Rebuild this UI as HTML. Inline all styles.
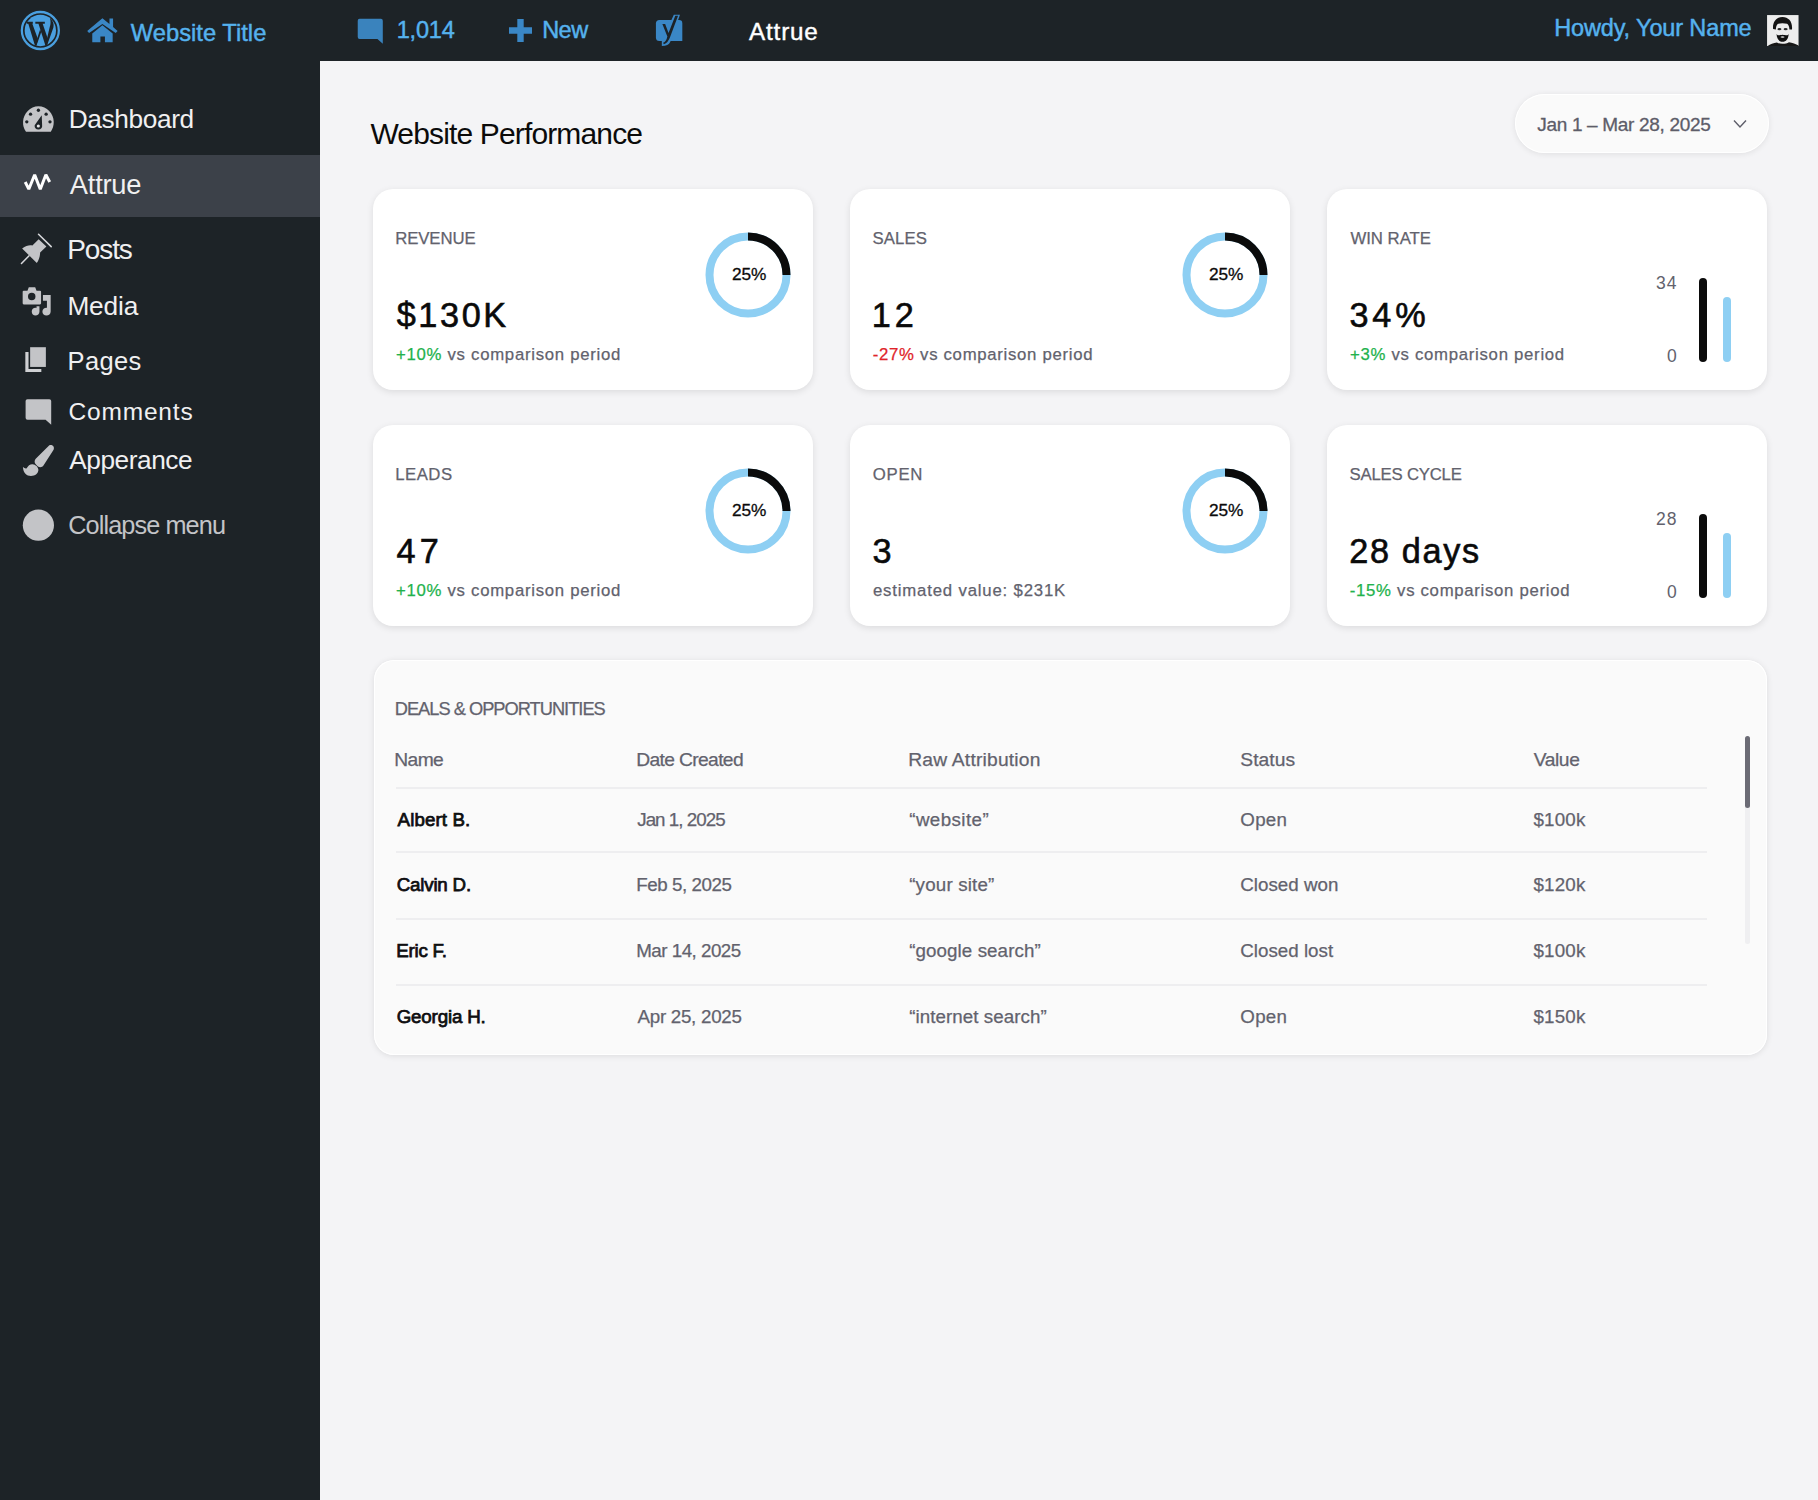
<!DOCTYPE html>
<html><head><meta charset="utf-8"><title>Attrue</title><style>
*{margin:0;padding:0;box-sizing:border-box}
html,body{width:1818px;height:1500px;overflow:hidden;background:#f4f4f6;font-family:"Liberation Sans",sans-serif}
.t{position:absolute;white-space:nowrap;line-height:1}
.abs{position:absolute}
#bar{position:absolute;left:0;top:0;width:1818px;height:61px;background:#1d2327}
#side{position:absolute;left:0;top:61px;width:320px;height:1439px;background:#1d2327}
#act{position:absolute;left:0;top:155px;width:320px;height:62px;background:#3c4149}
.card{position:absolute;width:440px;height:201px;background:#fff;border-radius:20px;box-shadow:0 2px 7px rgba(0,0,0,0.10)}
.tcard{position:absolute;left:374px;top:660px;width:1393px;height:395px;background:#fafafa;border-radius:20px;box-shadow:inset 0 0 0 1px #fff,0 1px 6px rgba(0,0,0,0.10)}
.pill{position:absolute;left:1515px;top:94px;width:254px;height:59px;border-radius:30px;background:#fafafa;box-shadow:inset 0 0 0 1px #fff,0 1px 6px rgba(0,0,0,0.09)}
.bar{border-radius:5px}
</style></head>
<body>
<div id="bar"></div><div id="side"></div><div id="act"></div>
<div class="pill"></div>
<svg class="abs" style="left:15px;top:6px" width="50" height="50" viewBox="0 0 1500 1500">
<circle cx="760" cy="735" r="555" fill="none" stroke="#4a9fdf" stroke-width="68"/>
<circle cx="760" cy="735" r="470" fill="#4a9fdf"/>
<g fill="#1d2327">
<path d="M360,476 L535,476 L535,530 L520,530 L690,1000 L640,1185 L598,1185 L400,530 L360,530 Z"/>
<path d="M598,1185 L645,1185 L785,790 L755,700 Z"/>
<path d="M610,476 L895,476 L895,530 L830,530 L995,1010 L955,1185 L912,1185 L705,530 L610,530 Z"/>
<path d="M912,1185 L960,1185 L1150,650 C1180,540 1140,440 1050,375 C1075,460 1075,540 1040,640 Z"/>
</g>
</svg>
<svg class="abs" style="left:82px;top:10px" width="40" height="40" viewBox="0 0 1500 1500">
<path fill="#3a87c6" d="M195,785 L765,305 L1030,525 L1030,320 L1165,320 L1165,640 L1335,785 L1265,860 L765,525 L265,860 Z"/>
<path fill="#3a87c6" d="M385,880 L765,570 L1150,880 L1150,1205 L860,1205 L860,990 L690,990 L690,1205 L385,1205 Z"/>
</svg>
<svg class="abs" style="left:350px;top:12px" width="40" height="40" viewBox="0 0 1500 1500">
<path fill="#3a83bd" d="M360,255 L1160,255 Q1230,255 1230,325 L1230,1195 L1030,1010 L360,1010 Q290,1010 290,940 L290,325 Q290,255 360,255 Z"/>
</svg>
<svg class="abs" style="left:509px;top:19px" width="24" height="23" viewBox="0 0 24 23">
<path fill="#3a87c6" d="M8.3,0 L14.7,0 L14.7,8.3 L23,8.3 L23,14.7 L14.7,14.7 L14.7,23 L8.3,23 L8.3,14.7 L0,14.7 L0,8.3 L8.3,8.3 Z"/>
</svg>
<svg class="abs" style="left:648px;top:10px" width="44" height="44" viewBox="0 0 1500 1500">
<path fill="#3a87c6" d="M390,340 L1060,340 Q1170,340 1170,450 L1170,1060 L390,1060 Q270,1060 270,940 L270,460 Q270,340 390,340 Z"/>
<path fill="#3a87c6" d="M880,165 L1090,165 L760,1080 Q700,1230 470,1230 L470,1060 Z"/>
<path fill="#1d2327" d="M490,478 L585,478 L700,780 L930,200 L1025,200 L760,900 Q690,1110 540,1170 L515,1120 Q630,1060 660,900 Z"/>
</svg>
<svg class="abs" style="left:1762px;top:10px" width="40" height="40" viewBox="0 0 1500 1500">
<rect x="190" y="190" width="1180" height="1160" fill="#ededed"/>
<path fill="#141414" d="M415,710 C390,430 560,260 770,262 C995,265 1150,430 1125,730 L1030,730 C1020,620 990,540 940,520 C840,490 690,490 600,520 C545,560 525,630 520,730 Z"/>
<ellipse cx="655" cy="720" rx="75" ry="42" fill="#2b2b2b"/>
<ellipse cx="885" cy="720" rx="75" ry="42" fill="#2b2b2b"/>
<path fill="#111" d="M545,900 C555,1090 650,1195 770,1195 C900,1195 990,1090 1000,900 C960,975 900,935 770,925 C650,935 590,975 545,900 Z"/>
<path fill="#e6e6e6" d="M690,1010 C720,975 820,975 850,1010 C830,1050 720,1050 690,1010 Z"/>
<path fill="#171717" d="M215,1350 C300,1285 440,1230 560,1215 C650,1285 900,1285 1010,1205 C1130,1225 1280,1275 1370,1335 L1370,1350 Z"/>
</svg>
<svg class="abs" style="left:18px;top:100px" width="40" height="40" viewBox="0 0 1500 1500">
<path fill="#c3c4c7" d="M300,1190 C210,1060 185,960 190,820 C200,500 460,230 765,230 C1080,230 1340,500 1340,820 C1340,960 1310,1070 1230,1190 Z"/>
<g fill="#1d2327">
<circle cx="765" cy="385" r="62"/><circle cx="470" cy="530" r="62"/><circle cx="1055" cy="530" r="62"/>
<circle cx="330" cy="820" r="62"/><circle cx="1200" cy="820" r="62"/>
<path d="M890,570 L905,960 C920,1040 860,1110 765,1110 C670,1110 610,1040 625,950 Z"/>
</g>
<circle cx="762" cy="975" r="58" fill="#e6e6e8"/>
</svg>
<svg class="abs" style="left:18px;top:166px" width="40" height="40" viewBox="0 0 1500 1500">
<polyline fill="none" stroke="#ffffff" stroke-width="112" stroke-linejoin="bevel" points="270,600 405,870 625,330 835,870 1045,330 1190,600"/>
</svg>
<svg class="abs" style="left:16px;top:229px" width="40" height="40" viewBox="0 0 1500 1500">
<line x1="845" y1="195" x2="1320" y2="660" stroke="#d6d7da" stroke-width="58" stroke-linecap="round"/>
<line x1="205" y1="1295" x2="490" y2="1005" stroke="#d6d7da" stroke-width="58" stroke-linecap="round"/>
<path fill="#c3c4c7" d="M850,385 L1140,655 L905,885 C900,1030 860,1160 780,1275 L230,730 C380,620 500,590 615,615 Z"/>
</svg>
<svg class="abs" style="left:16px;top:282px" width="40" height="40" viewBox="0 0 1500 1500">
<path fill="#c3c4c7" d="M480,200 L720,200 L770,330 L900,330 Q940,330 940,370 L940,800 Q940,840 900,840 L290,840 Q250,840 250,800 L250,370 Q250,330 290,330 L430,330 Z"/>
<circle cx="590" cy="540" r="140" fill="#1d2327"/>
<path fill="#c3c4c7" d="M1010,490 L1300,490 L1300,1110 C1300,1200 1230,1260 1140,1260 C1060,1260 990,1200 990,1120 C990,1030 1060,970 1140,970 C1150,970 1160,970 1160,975 L1160,700 L1010,700 Z"/>
<path fill="#c3c4c7" d="M770,910 L880,910 L880,1110 C880,1200 810,1260 730,1260 C650,1260 590,1200 590,1110 C590,1030 650,970 730,970 C750,970 770,975 770,980 Z"/>
</svg>
<svg class="abs" style="left:16px;top:340px" width="40" height="40" viewBox="0 0 1500 1500">
<rect x="530" y="270" width="590" height="740" fill="#c3c4c7"/>
<path fill="#cfd0d3" d="M350,450 L470,450 L470,1090 L950,1090 L950,1200 L350,1200 Z"/>
</svg>
<svg class="abs" style="left:16px;top:392px" width="40" height="40" viewBox="0 0 1500 1500">
<path fill="#c3c4c7" d="M430,270 L1250,270 Q1320,270 1320,340 L1320,1225 L1110,1040 L430,1040 Q360,1040 360,970 L360,340 Q360,270 430,270 Z"/>
</svg>
<svg class="abs" style="left:16px;top:440px" width="40" height="40" viewBox="0 0 1500 1500">
<path fill="#c3c4c7" d="M1250,200 C1370,160 1460,260 1410,370 L1030,960 C980,1030 880,1040 810,980 L740,910 C680,850 690,760 740,700 Z"/>
<path fill="#c3c4c7" d="M620,905 C730,915 840,1010 840,1120 C840,1260 720,1350 560,1350 C400,1350 270,1240 260,1015 C310,1060 360,1080 400,1060 C450,960 530,900 620,905 Z"/>
</svg>
<svg class="abs" style="left:22px;top:509px" width="33" height="33" viewBox="0 0 33 33"><circle cx="16.4" cy="16.2" r="15.6" fill="#c3c4c7"/></svg>
<svg class="abs" style="left:1730px;top:116px" width="20" height="16" viewBox="0 0 20 16"><polyline points="4,4.5 10,11 16,4.5" fill="none" stroke="#5d5d69" stroke-width="1.4"/></svg>

<div class="t" style="left:130.75px;top:21px;font-size:23.75px;letter-spacing:0.007px;color:#55b2ee;-webkit-text-stroke-width:0.45px;">Website Title</div>
<div class="t" style="left:396.72px;top:19px;font-size:23.5px;letter-spacing:-0.200px;color:#55b2ee;-webkit-text-stroke-width:0.45px;">1,014</div>
<div class="t" style="left:542.20px;top:19px;font-size:23.5px;letter-spacing:-0.551px;color:#55b2ee;-webkit-text-stroke-width:0.45px;">New</div>
<div class="t" style="left:749.04px;top:20px;font-size:24.25px;letter-spacing:0.817px;color:#ffffff;-webkit-text-stroke-width:0.4px;">Attrue</div>
<div class="t" style="left:1554.20px;top:17px;font-size:23.5px;letter-spacing:-0.130px;color:#55b2ee;-webkit-text-stroke-width:0.45px;">Howdy, Your Name</div>
<div class="t" style="left:68.68px;top:106px;font-size:26.25px;letter-spacing:-0.372px;color:#f0f0f1;">Dashboard</div>
<div class="t" style="left:69.85px;top:171px;font-size:27.25px;letter-spacing:-0.226px;color:#f0f0f1;">Attrue</div>
<div class="t" style="left:67.26px;top:236px;font-size:28.0px;letter-spacing:-1.108px;color:#f0f0f1;">Posts</div>
<div class="t" style="left:67.40px;top:293px;font-size:26.25px;letter-spacing:-0.150px;color:#f0f0f1;">Media</div>
<div class="t" style="left:67.56px;top:349px;font-size:25.5px;letter-spacing:0.368px;color:#f0f0f1;">Pages</div>
<div class="t" style="left:68.43px;top:400px;font-size:24.5px;letter-spacing:0.834px;color:#f0f0f1;">Comments</div>
<div class="t" style="left:69.27px;top:447px;font-size:26.25px;letter-spacing:-0.463px;color:#f0f0f1;">Apperance</div>
<div class="t" style="left:68.29px;top:513px;font-size:25.25px;letter-spacing:-0.899px;color:#c3c4c7;">Collapse menu</div>
<div class="t" style="left:370.45px;top:119px;font-size:30.0px;letter-spacing:-0.852px;color:#0b0b0b;">Website Performance</div>
<div class="t" style="left:1537.27px;top:115px;font-size:19.0px;letter-spacing:-0.317px;color:#5d5d69;-webkit-text-stroke-width:0.3px;">Jan 1 – Mar 28, 2025</div>
<div class="card" style="left:373px;top:189px"></div>
<div class="card" style="left:850px;top:189px"></div>
<div class="card" style="left:1327px;top:189px"></div>
<div class="card" style="left:373px;top:425px"></div>
<div class="card" style="left:850px;top:425px"></div>
<div class="card" style="left:1327px;top:425px"></div>
<div class="t" style="left:395.28px;top:231px;font-size:16.75px;letter-spacing:-0.114px;color:#62626d;-webkit-text-stroke-width:0.25px;">REVENUE</div>
<div class="t" style="left:396.68px;top:298px;font-size:34.25px;letter-spacing:2.609px;color:#0a0a0a;-webkit-text-stroke-width:0.6px;">$130K</div>
<div class="t" style="left:395.90px;top:347px;font-size:16.75px;letter-spacing:0.722px;color:#62626d;-webkit-text-stroke-width:0.25px;"><span style="color:#22b24c">+10%</span> vs comparison period</div>
<svg class="abs" style="left:702.5px;top:229.60000000000002px" width="90" height="90" viewBox="0 0 90 90"><circle cx="45" cy="45" r="38.5" fill="none" stroke="#8ecff3" stroke-width="8"/><path d="M45 6.5 A38.5 38.5 0 0 1 83.5 45" fill="none" stroke="#0b0b0b" stroke-width="8"/></svg>
<div class="t" style="left:732.01px;top:266px;font-size:17.25px;letter-spacing:-0.044px;color:#0b0b0b;-webkit-text-stroke-width:0.3px;">25%</div>
<div class="t" style="left:872.61px;top:231px;font-size:16.75px;letter-spacing:0.069px;color:#62626d;-webkit-text-stroke-width:0.25px;">SALES</div>
<div class="t" style="left:871.87px;top:298px;font-size:34.25px;letter-spacing:3.841px;color:#0a0a0a;-webkit-text-stroke-width:0.6px;">12</div>
<div class="t" style="left:872.83px;top:347px;font-size:16.75px;letter-spacing:0.694px;color:#62626d;-webkit-text-stroke-width:0.25px;"><span style="color:#e0242a">-27%</span> vs comparison period</div>
<svg class="abs" style="left:1179.5px;top:229.60000000000002px" width="90" height="90" viewBox="0 0 90 90"><circle cx="45" cy="45" r="38.5" fill="none" stroke="#8ecff3" stroke-width="8"/><path d="M45 6.5 A38.5 38.5 0 0 1 83.5 45" fill="none" stroke="#0b0b0b" stroke-width="8"/></svg>
<div class="t" style="left:1209.01px;top:266px;font-size:17.25px;letter-spacing:-0.044px;color:#0b0b0b;-webkit-text-stroke-width:0.3px;">25%</div>
<div class="t" style="left:1350.41px;top:231px;font-size:16.75px;letter-spacing:-0.012px;color:#62626d;-webkit-text-stroke-width:0.25px;">WIN RATE</div>
<div class="t" style="left:1349.56px;top:298px;font-size:34.25px;letter-spacing:3.763px;color:#0a0a0a;-webkit-text-stroke-width:0.6px;">34%</div>
<div class="t" style="left:1349.90px;top:347px;font-size:16.75px;letter-spacing:0.715px;color:#62626d;-webkit-text-stroke-width:0.25px;"><span style="color:#22b24c">+3%</span> vs comparison period</div>
<div class="t" style="left:1655.97px;top:275px;font-size:17.5px;letter-spacing:0.924px;color:#62626d;">34</div>
<div class="t" style="left:1666.97px;top:348px;font-size:17.5px;letter-spacing:0.000px;color:#62626d;">0</div>
<div class="abs bar" style="left:1699px;top:278px;width:8px;height:84px;background:#0b0b0b"></div>
<div class="abs bar" style="left:1722.5px;top:297px;width:8.5px;height:65px;background:#8ecff3"></div>
<div class="t" style="left:395.28px;top:467px;font-size:16.75px;letter-spacing:0.479px;color:#62626d;-webkit-text-stroke-width:0.25px;">LEADS</div>
<div class="t" style="left:396.57px;top:534px;font-size:34.25px;letter-spacing:4.051px;color:#0a0a0a;-webkit-text-stroke-width:0.6px;">47</div>
<div class="t" style="left:395.90px;top:583px;font-size:16.75px;letter-spacing:0.722px;color:#62626d;-webkit-text-stroke-width:0.25px;"><span style="color:#22b24c">+10%</span> vs comparison period</div>
<svg class="abs" style="left:702.5px;top:465.6px" width="90" height="90" viewBox="0 0 90 90"><circle cx="45" cy="45" r="38.5" fill="none" stroke="#8ecff3" stroke-width="8"/><path d="M45 6.5 A38.5 38.5 0 0 1 83.5 45" fill="none" stroke="#0b0b0b" stroke-width="8"/></svg>
<div class="t" style="left:732.01px;top:502px;font-size:17.25px;letter-spacing:-0.044px;color:#0b0b0b;-webkit-text-stroke-width:0.3px;">25%</div>
<div class="t" style="left:872.79px;top:467px;font-size:16.75px;letter-spacing:0.733px;color:#62626d;-webkit-text-stroke-width:0.25px;">OPEN</div>
<div class="t" style="left:872.56px;top:534px;font-size:34.25px;letter-spacing:0.000px;color:#0a0a0a;-webkit-text-stroke-width:0.6px;">3</div>
<div class="t" style="left:872.96px;top:583px;font-size:16.75px;letter-spacing:0.823px;color:#62626d;-webkit-text-stroke-width:0.25px;"><span style="color:#22b24c"></span>estimated value: $231K</div>
<svg class="abs" style="left:1179.5px;top:465.6px" width="90" height="90" viewBox="0 0 90 90"><circle cx="45" cy="45" r="38.5" fill="none" stroke="#8ecff3" stroke-width="8"/><path d="M45 6.5 A38.5 38.5 0 0 1 83.5 45" fill="none" stroke="#0b0b0b" stroke-width="8"/></svg>
<div class="t" style="left:1209.01px;top:502px;font-size:17.25px;letter-spacing:-0.044px;color:#0b0b0b;-webkit-text-stroke-width:0.3px;">25%</div>
<div class="t" style="left:1349.61px;top:467px;font-size:16.75px;letter-spacing:-0.229px;color:#62626d;-webkit-text-stroke-width:0.25px;">SALES CYCLE</div>
<div class="t" style="left:1349.26px;top:534px;font-size:34.25px;letter-spacing:1.655px;color:#0a0a0a;-webkit-text-stroke-width:0.6px;">28 days</div>
<div class="t" style="left:1349.83px;top:583px;font-size:16.75px;letter-spacing:0.694px;color:#62626d;-webkit-text-stroke-width:0.25px;"><span style="color:#22b24c">-15%</span> vs comparison period</div>
<div class="t" style="left:1655.94px;top:511px;font-size:17.5px;letter-spacing:1.199px;color:#62626d;">28</div>
<div class="t" style="left:1666.97px;top:584px;font-size:17.5px;letter-spacing:0.000px;color:#62626d;">0</div>
<div class="abs bar" style="left:1699px;top:514px;width:8px;height:84px;background:#0b0b0b"></div>
<div class="abs bar" style="left:1722.5px;top:533px;width:8.5px;height:65px;background:#8ecff3"></div>
<div class="tcard"></div>
<div class="t" style="left:394.72px;top:700px;font-size:18.25px;letter-spacing:-0.991px;color:#62626d;-webkit-text-stroke-width:0.25px;">DEALS &amp; OPPORTUNITIES</div>
<div class="t" style="left:394.27px;top:750px;font-size:19.25px;letter-spacing:-0.623px;color:#62626d;-webkit-text-stroke-width:0.25px;">Name</div>
<div class="t" style="left:636.19px;top:750px;font-size:19.25px;letter-spacing:-0.643px;color:#62626d;-webkit-text-stroke-width:0.25px;">Date Created</div>
<div class="t" style="left:908.28px;top:750px;font-size:19.25px;letter-spacing:0.193px;color:#62626d;-webkit-text-stroke-width:0.25px;">Raw Attribution</div>
<div class="t" style="left:1240.27px;top:750px;font-size:19.25px;letter-spacing:0.054px;color:#62626d;-webkit-text-stroke-width:0.25px;">Status</div>
<div class="t" style="left:1533.69px;top:750px;font-size:19.25px;letter-spacing:-0.411px;color:#62626d;-webkit-text-stroke-width:0.25px;">Value</div>
<div class="abs" style="left:396px;top:787px;width:1311px;height:2px;background:#eeeef0"></div>
<div class="t" style="left:397.54px;top:811px;font-size:18.75px;letter-spacing:0.112px;color:#0e0e10;-webkit-text-stroke-width:0.75px;">Albert B.</div>
<div class="t" style="left:637.21px;top:811px;font-size:18.75px;letter-spacing:-0.946px;color:#62626d;-webkit-text-stroke-width:0.25px;">Jan 1, 2025</div>
<div class="t" style="left:909.21px;top:811px;font-size:18.75px;letter-spacing:0.430px;color:#62626d;-webkit-text-stroke-width:0.25px;">“website”</div>
<div class="t" style="left:1240.29px;top:811px;font-size:18.75px;letter-spacing:0.283px;color:#62626d;-webkit-text-stroke-width:0.25px;">Open</div>
<div class="t" style="left:1533.49px;top:811px;font-size:18.75px;letter-spacing:0.170px;color:#62626d;-webkit-text-stroke-width:0.25px;">$100k</div>
<div class="abs" style="left:396px;top:851px;width:1311px;height:2px;background:#eeeef0"></div>
<div class="t" style="left:396.75px;top:876px;font-size:18.75px;letter-spacing:-0.211px;color:#0e0e10;-webkit-text-stroke-width:0.75px;">Calvin D.</div>
<div class="t" style="left:636.26px;top:876px;font-size:18.75px;letter-spacing:-0.429px;color:#62626d;-webkit-text-stroke-width:0.25px;">Feb 5, 2025</div>
<div class="t" style="left:909.21px;top:876px;font-size:18.75px;letter-spacing:0.177px;color:#62626d;-webkit-text-stroke-width:0.25px;">“your site”</div>
<div class="t" style="left:1240.31px;top:876px;font-size:18.75px;letter-spacing:0.010px;color:#62626d;-webkit-text-stroke-width:0.25px;">Closed won</div>
<div class="t" style="left:1533.49px;top:876px;font-size:18.75px;letter-spacing:0.170px;color:#62626d;-webkit-text-stroke-width:0.25px;">$120k</div>
<div class="abs" style="left:396px;top:918px;width:1311px;height:2px;background:#eeeef0"></div>
<div class="t" style="left:396.16px;top:942px;font-size:18.75px;letter-spacing:-0.218px;color:#0e0e10;-webkit-text-stroke-width:0.75px;">Eric F.</div>
<div class="t" style="left:636.26px;top:942px;font-size:18.75px;letter-spacing:-0.505px;color:#62626d;-webkit-text-stroke-width:0.25px;">Mar 14, 2025</div>
<div class="t" style="left:909.21px;top:942px;font-size:18.75px;letter-spacing:0.086px;color:#62626d;-webkit-text-stroke-width:0.25px;">“google search”</div>
<div class="t" style="left:1240.31px;top:942px;font-size:18.75px;letter-spacing:0.005px;color:#62626d;-webkit-text-stroke-width:0.25px;">Closed lost</div>
<div class="t" style="left:1533.49px;top:942px;font-size:18.75px;letter-spacing:0.170px;color:#62626d;-webkit-text-stroke-width:0.25px;">$100k</div>
<div class="abs" style="left:396px;top:984px;width:1311px;height:2px;background:#eeeef0"></div>
<div class="t" style="left:396.70px;top:1008px;font-size:18.75px;letter-spacing:-0.179px;color:#0e0e10;-webkit-text-stroke-width:0.75px;">Georgia H.</div>
<div class="t" style="left:637.53px;top:1008px;font-size:18.75px;letter-spacing:-0.274px;color:#62626d;-webkit-text-stroke-width:0.25px;">Apr 25, 2025</div>
<div class="t" style="left:909.21px;top:1008px;font-size:18.75px;letter-spacing:0.062px;color:#62626d;-webkit-text-stroke-width:0.25px;">“internet search”</div>
<div class="t" style="left:1240.29px;top:1008px;font-size:18.75px;letter-spacing:0.283px;color:#62626d;-webkit-text-stroke-width:0.25px;">Open</div>
<div class="t" style="left:1533.49px;top:1008px;font-size:18.75px;letter-spacing:0.170px;color:#62626d;-webkit-text-stroke-width:0.25px;">$150k</div>
<div class="abs" style="left:1745px;top:736px;width:5px;height:208px;border-radius:3px;background:#efeff1"></div>
<div class="abs" style="left:1744.5px;top:736px;width:5.5px;height:72px;border-radius:3px;background:#6b6b75"></div>
</body></html>
